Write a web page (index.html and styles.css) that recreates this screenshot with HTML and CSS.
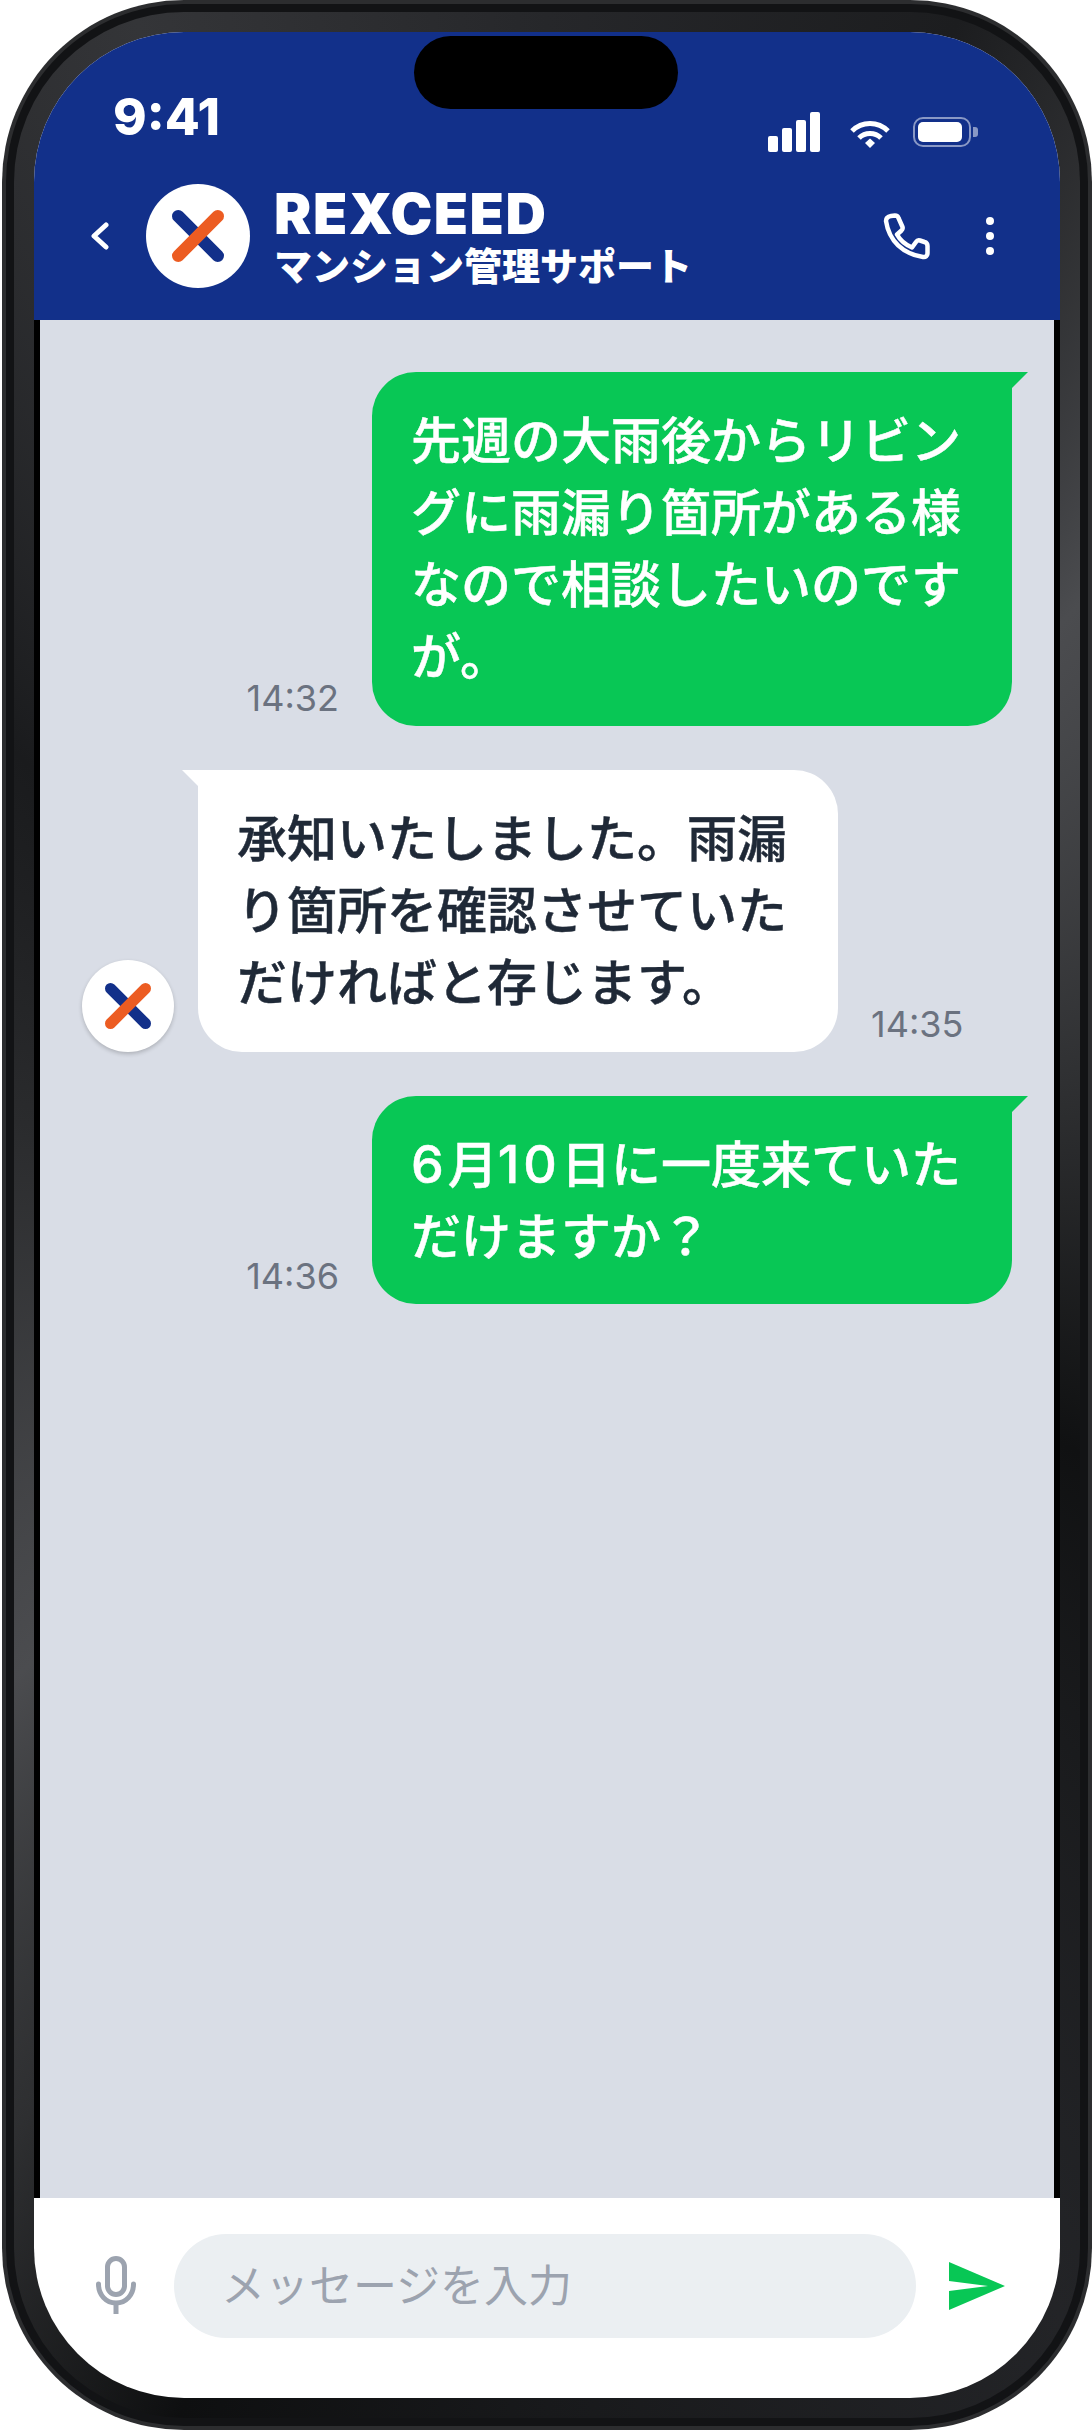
FILE: index.html
```html
<!DOCTYPE html>
<html lang="ja">
<head>
    <meta charset="UTF-8">
    <meta name="viewport" content="width=device-width, initial-scale=1.0">
    <title>REXCEED - マンション管理サポート</title>
    <link rel="stylesheet" href="styles.css">
</head>
<body>

    <div class="phone">
        <div class="phone-ring">
            <div class="phone-bezel">
                <div class="screen">
                    <div class="notch"></div>

                    <div class="chat-header">
                        <div class="status-bar">
                            <span class="status-time">9:41</span>
                            <div class="status-icons">
                                <svg class="icon-signal" width="52" height="40" viewBox="0 0 52 40" fill="#fff">
                                    <rect x="0" y="24" width="10" height="16" rx="2"/>
                                    <rect x="14" y="16" width="10" height="24" rx="2"/>
                                    <rect x="28" y="8" width="10" height="32" rx="2"/>
                                    <rect x="42" y="0" width="10" height="40" rx="2"/>
                                </svg>
                                <svg class="icon-wifi" width="40" height="28" viewBox="0 0 40 28" fill="none" stroke="#fff" stroke-width="5">
                                    <path d="M2 11C12 1 28 1 38 11"/>
                                    <path d="M9 18C15 12 25 12 31 18"/>
                                    <path d="M15 23L20 18.500L25 23L20 28Z" fill="#fff" stroke="none"/>
                                </svg>
                                <div class="battery">
                                    <div class="battery-body"><div class="battery-level"></div></div>
                                    <div class="battery-cap"></div>
                                </div>
                            </div>
                        </div>

                        <div class="nav-bar">
                            <svg class="icon-back" width="18" height="28" viewBox="0 0 18 28" fill="none" stroke="#fff" stroke-width="5" stroke-linecap="round" stroke-linejoin="round">
                                <path d="M15 3L3 14L15 25"/>
                            </svg>
                            <div class="logo-circle">
                                <svg width="52" height="52" viewBox="0 0 46 46" fill="none" stroke-width="11" stroke-linecap="round">
                                    <path d="M5.500 5.500L40.500 40.500" stroke="#12308a"/>
                                    <path d="M5.500 40.500L40.500 5.500" stroke="#ec5c22"/>
                                </svg>
                            </div>
                            <div class="nav-title">
                                <div class="nav-name">REXCEED</div>
                                <div class="nav-sub">マンション管理サポート</div>
                            </div>
                            <svg class="icon-phone" width="47" height="47" viewBox="0 0 47 47" fill="none" stroke="#fff" stroke-width="4.500" stroke-linejoin="round">
                                <path d="M3 8C3 5 5 3.500 8 3L12 2.500C14 2.500 15 3.500 15.500 5L19.500 14C20 15.500 19.500 16.500 18.500 17.500L14 21.500C17 27 22 31.500 29 34.500L33 29C34 27.500 35.500 27 37 27.500L41.500 29C43.500 29.500 44.500 31 44.500 33V40C44.500 43 42.500 44.500 40 44C20 41 6 28 3 8Z"/>
                            </svg>
                            <div class="icon-dots">
                                <span></span>
                                <span></span>
                                <span></span>
                            </div>
                        </div>
                    </div>

                    <div class="chat-frame">
                        <div class="chat-box">
                            <div class="chat-row chat-row-sent">
                                <span class="chat-time">14:32</span>
                                <div class="bubble bubble-sent">先週の大雨後からリビングに雨漏り箇所がある様なので相談したいのですが。</div>
                            </div>

                            <div class="chat-row">
                                <div class="avatar">
                                    <svg width="46" height="46" viewBox="0 0 46 46" fill="none" stroke-width="11" stroke-linecap="round">
                                        <path d="M5.500 5.500L40.500 40.500" stroke="#12308a"/>
                                        <path d="M5.500 40.500L40.500 5.500" stroke="#ec5c22"/>
                                    </svg>
                                </div>
                                <div class="bubble bubble-received">承知いたしました。雨漏り箇所を確認させていただければと存じます。</div>
                                <span class="chat-time">14:35</span>
                            </div>

                            <div class="chat-row chat-row-sent">
                                <span class="chat-time">14:36</span>
                                <div class="bubble bubble-sent bubble-short"><span class="bubble-num">6</span>月<span class="bubble-num">10</span>日に一度来ていただけますか？</div>
                            </div>
                        </div>
                    </div>

                    <div class="chat-input-container">
                        <svg class="icon-mic" width="40" height="60" viewBox="0 0 40 60" fill="none" stroke="#9ca3af" stroke-width="5" stroke-linecap="round">
                            <rect x="11.500" y="2.500" width="17" height="36" rx="8.500"/>
                            <path d="M2.500 28C2.500 39 10 47 20 47C30 47 37.500 39 37.500 28"/>
                            <path d="M20 47V58" stroke-linecap="butt"/>
                        </svg>
                        <div class="chat-input">メッセージを入力</div>
                        <svg class="icon-send" width="56" height="48" viewBox="0 0 56 48" fill="#08c755">
                            <polygon points="0,0 56,24 0,48 0,29 39,24 0,19"/>
                        </svg>
                    </div>
                </div>
            </div>
        </div>
    </div>

</body>
</html>
```

FILE: styles.css
```css
body {
    font-family: "Noto Sans CJK JP", "Noto Sans", sans-serif;
    background-color: #fff;
    margin: 0;
    padding: 0;
}

.phone {
    width: 1090px;
    height: 2430px;
    margin-left: 2px;
    padding: 4px;
    box-sizing: border-box;
    background-color: #2c2d2f;
    border-radius: 182px;
}

.phone-ring {
    height: 100%;
    padding: 8px;
    box-sizing: border-box;
    background-color: #121315;
    border-radius: 178px;
}

.phone-bezel {
    height: 100%;
    padding: 20px;
    box-sizing: border-box;
    border-radius: 170px;
    background: conic-gradient(#26272a 0deg, #1c1d1f 19deg, #4b4c4f 41deg, #101112 114deg, #232427 155deg, #18191b 180deg, #0e0f10 197deg, #2e2f31 210deg, #4b4c4f 229deg, #2a2b2d 280deg, #1a1b1d 311deg, #343538 341deg, #26272a 360deg);
}

.screen {
    position: relative;
    display: flex;
    flex-direction: column;
    height: 100%;
    overflow: hidden;
    border-radius: 150px;
    background-color: #fff;
}

.notch {
    position: absolute;
    top: 4px;
    left: 380px;
    width: 264px;
    height: 73px;
    background-color: #000;
    border-radius: 37px;
}

.chat-header {
    height: 288px;
    background-color: #12308a;
    color: #fff;
}

.status-bar {
    display: flex;
    justify-content: space-between;
    align-items: flex-start;
    height: 152px;
    padding: 60px 82px 0 79px;
    box-sizing: border-box;
}

.status-time {
    font-family: Inter, sans-serif;
    font-size: 51px;
    font-weight: 800;
    line-height: 50px;
}

.status-icons {
    display: flex;
    align-items: center;
    margin-top: 20px;
}

.icon-wifi {
    margin: 3px 23px 0 30px;
}

.battery {
    display: flex;
    align-items: center;
    gap: 2px;
}

.battery-body {
    width: 58px;
    height: 30px;
    padding: 2.500px;
    box-sizing: border-box;
    border: 2.500px solid rgba(255, 255, 255, 0.5);
    border-radius: 10px;
}

.battery-level {
    width: 44px;
    height: 20px;
    background-color: #fff;
    border-radius: 5px;
}

.battery-cap {
    width: 5px;
    height: 10px;
    background-color: rgba(255, 255, 255, 0.5);
    border-radius: 0 3px 3px 0;
}

.nav-bar {
    display: flex;
    align-items: center;
    height: 104px;
    padding: 0 66px 0 57px;
}

.logo-circle {
    display: flex;
    align-items: center;
    justify-content: center;
    flex-shrink: 0;
    width: 104px;
    height: 104px;
    margin-left: 37px;
    background-color: #fff;
    border-radius: 50%;
}

.nav-title {
    margin-left: 24px;
    flex: 1;
}

.nav-name {
    font-family: Inter, sans-serif;
    font-size: 56px;
    font-weight: 900;
    line-height: 56px;
    letter-spacing: 1.500px;
}

.nav-sub {
    font-size: 38px;
    font-weight: 900;
    line-height: 44px;
}

.icon-dots {
    display: flex;
    flex-direction: column;
    gap: 7px;
    margin-left: 56px;
}

.icon-dots span {
    width: 8px;
    height: 8px;
    background-color: #fff;
    border-radius: 50%;
}

.chat-frame {
    flex: 1;
    padding: 0 6px;
    background-color: #000;
}

.chat-box {
    display: flex;
    flex-direction: column;
    gap: 44px;
    height: 100%;
    padding: 52px 42px 0;
    box-sizing: border-box;
    background-color: #d9dde6;
}

.chat-row {
    display: flex;
    align-items: flex-end;
}

.chat-row-sent {
    justify-content: flex-end;
}

.bubble {
    position: relative;
    width: 640px;
    padding: 29px 38px 37px 39px;
    box-sizing: border-box;
    font-size: 50px;
    font-weight: 500;
    line-height: 72px;
    -webkit-text-stroke: 0.500px currentColor;
}

.bubble-short {
    padding-bottom: 35px;
}

.bubble-num {
    font-family: Inter, sans-serif;
    font-size: 52px;
    line-height: 0;
    letter-spacing: 4px;
}

.bubble-sent {
    color: #fff;
    background-color: #08c755;
    border-radius: 44px 0 44px 44px;
}

.bubble-sent::after {
    content: "";
    position: absolute;
    top: 0;
    right: -16px;
    border-top: 16px solid #08c755;
    border-right: 16px solid transparent;
}

.bubble-received {
    color: #1f2937;
    background-color: #fff;
    border-radius: 0 44px 44px 44px;
}

.bubble-received::before {
    content: "";
    position: absolute;
    top: 0;
    left: -16px;
    border-top: 16px solid #fff;
    border-left: 16px solid transparent;
}

.avatar {
    display: flex;
    align-items: center;
    justify-content: center;
    flex-shrink: 0;
    width: 92px;
    height: 92px;
    margin-right: 24px;
    background-color: #fff;
    border-radius: 50%;
    box-shadow: 0 2px 4px rgba(0, 0, 0, 0.2);
}

.chat-time {
    margin: 0 33px 10px;
    font-family: Inter, sans-serif;
    font-size: 36px;
    line-height: 36px;
    color: #6b7280;
}

.chat-input-container {
    display: flex;
    align-items: center;
    height: 200px;
    padding: 36px 55px 60px 62px;
    box-sizing: border-box;
}

.chat-input {
    flex: 1;
    height: 104px;
    margin: 0 33px 0 38px;
    padding-left: 47px;
    font-size: 44px;
    line-height: 98px;
    color: #9ca3af;
    background-color: #ebeff2;
    border-radius: 52px;
}
```
